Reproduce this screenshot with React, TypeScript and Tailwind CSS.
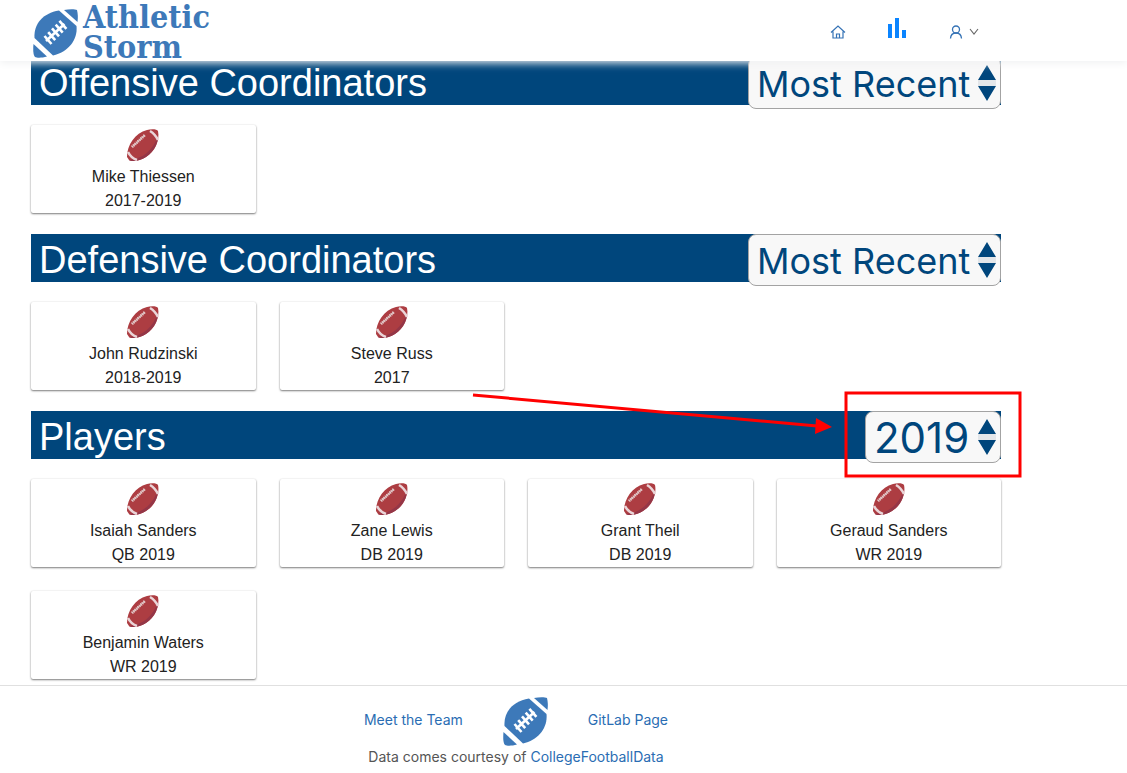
import React from "react";

type Person = { name: string; detail: string };

function LogoBall({ className }: { className: string }) {
  return (
    <svg viewBox="0 0 45 49" className={className} aria-hidden="true">
      <path
        fill="#3d79b9"
        d="M1.500 29C0.500 15 10 4 26 1.500L43.500 17C45 31 35 43 20 46.500Z"
      />
      <path fill="#3d79b9" d="M31 1C36 0 42 0 44 1C45 5 45 9 44.500 13Z" />
      <path fill="#3d79b9" d="M0.500 35L14 47.500C9 49 4 49 2 48C0 46 0 40 0.500 35Z" />
      <path
        stroke="#fff"
        strokeWidth="2.6"
        fill="none"
        d="M13 32L31.500 15M11.500 27L18.500 35M15.200 23.200L22.200 31.200M19 19.400L26 27.400M22.700 15.700L29.700 23.700M26.400 11.900L33.400 19.900"
      />
    </svg>
  );
}

function RedBall() {
  return (
    <svg viewBox="0 0 34 34" className="h-[34px] w-[34px]" aria-hidden="true">
      <path fill="#ad3d42" d="M1 29C1 17 9 5 21 2C25 1 31 1 32 3C34 12 29 24 20 29C14 33 6 34 3 32Z" />
      <path fill="#943647" d="M32 8C32 16 28 23 20 29C14 33 6 34 3 32C17 31 27 22 32 8Z" />
      <path fill="none" stroke="#ead5d8" strokeWidth="2.6" d="M24 3Q29 6 32 12M2 24Q5 30 11 32" />
      <path stroke="#d8b4b5" strokeWidth="1.5" d="M6 19L19 7" />
      <path stroke="#e4cdcd" strokeWidth="3" strokeDasharray="1 1" d="M6 19L19 7" />
    </svg>
  );
}

function SeasonSelect({ label, options, style }: { label: string; options: string[]; style: string }) {
  return (
    <div className={`relative h-[52px] shrink-0 ${style}`}>
      <select
        aria-label={label}
        className="block h-full w-full appearance-none rounded-lg border border-[#a3a3a3] bg-[#f8f8f8] pt-0.5 pl-2 font-['Inter',sans-serif] leading-[46px] text-[#00467c]"
      >
        {options.map((option) => (
          <option key={option}>{option}</option>
        ))}
      </select>
      <svg
        viewBox="0 0 18 36"
        className="pointer-events-none absolute top-2 right-[5px] h-9 w-[18px]"
        aria-hidden="true"
      >
        <path fill="#e3e6e9" d="M0 15H18V21H0Z" />
        <path fill="#00467c" d="M0 15L9 0L18 15ZM0 21H18L9 36Z" />
      </svg>
    </div>
  );
}

function Annotation() {
  return (
    <svg
      viewBox="0 0 550 87"
      className="pointer-events-none absolute -top-5 -right-[21px] h-[87px] w-[550px]"
      aria-hidden="true"
    >
      <rect x="374" y="2" width="174" height="83" fill="none" stroke="#f00" strokeWidth="3" />
      <path stroke="#f00" strokeWidth="3" d="M1 4L345 35" />
      <path fill="#f00" d="M344 27L360 36L343 43Z" />
    </svg>
  );
}

function Section({
  title,
  options,
  selectStyle,
  people,
  children,
}: {
  title: string;
  options: string[];
  selectStyle: string;
  people: Person[];
  children?: React.ReactNode;
}) {
  return (
    <section className="relative mb-[21px] last:mb-0">
      <div className="mb-5 flex h-12 items-start justify-between bg-[#00467c]">
        <h2 className="pl-2 text-[38px] leading-[52px] text-white">{title}</h2>
        <SeasonSelect label={`${title} season`} options={options} style={selectStyle} />
      </div>
      <ul className="grid grid-cols-4 gap-6">
        {people.map((person) => (
          <li
            key={person.name}
            className="flex h-[88px] flex-col items-center rounded-xs bg-white pt-[3px] text-base text-[#222] shadow-[0_1px_2px_rgba(0,0,0,0.5),0_0_2px_rgba(0,0,0,0.08)]"
          >
            <RedBall />
            <div className="mt-[3px] leading-6">{person.name}</div>
            <div className="leading-6">{person.detail}</div>
          </li>
        ))}
      </ul>
      {children}
    </section>
  );
}

export default function App() {
  return (
    <div className="min-h-screen bg-white font-['Liberation_Sans',Arial,sans-serif]">
      <header className="sticky top-0 z-10 flex h-[61px] items-center justify-between bg-white pr-[148px] pl-[33px] shadow-[0_2px_8px_#f0f1f2]">
        <a href="#home" className="flex items-center gap-[5px] text-[#3d79b9]">
          <LogoBall className="mt-1.5 h-[49px] w-[45px]" />
          <span className="mt-0.5 font-['DejaVu_Serif_Condensed','DejaVu_Serif',serif] text-[32px] leading-[30px] font-bold">
            Athletic
            <br />
            Storm
          </span>
        </a>
        <nav className="flex items-center">
          <a href="#home" aria-label="Home" className="mt-0.5">
            <svg viewBox="0 0 16 16" className="h-4 w-4" fill="none" stroke="#3472b5" strokeWidth="1.2">
              <path d="M1 8.5L8 2L15 8.5M3 7.5V14H13V7.5M6.5 14V10H9.5V14" />
            </svg>
          </a>
          <a href="#stats" aria-label="Statistics" className="mb-1.5 ml-[42px]">
            <svg viewBox="0 0 18 20" className="h-5 w-[18px]" fill="#0a84ff">
              <path d="M0 6H4V20H0ZM7 0H11V20H7ZM14 12H18V20H14Z" />
            </svg>
          </a>
          <button type="button" aria-label="Account" className="mt-0.5 ml-[42px] flex items-center gap-[5px]">
            <svg viewBox="0 0 16 16" className="h-4 w-4" fill="none" stroke="#3472b5" strokeWidth="1.3">
              <circle cx="8" cy="5.5" r="3.5" />
              <path d="M2.5 14.5C2.7 11 5 9 8 9S13.300 11 13.500 14.500" />
            </svg>
            <svg viewBox="0 0 10 10" className="h-2.5 w-2.5" fill="none" stroke="#666" strokeWidth="1.1">
              <path d="M1 2L5 7L9 2" />
            </svg>
          </button>
        </nav>
      </header>
      <main className="-mt-1 pr-[126px] pb-1.5 pl-[31px]">
        <Section
          title="Offensive Coordinators"
          options={["Most Recent"]}
          selectStyle="w-[253px] text-[36px]"
          people={[{ name: "Mike Thiessen", detail: "2017-2019" }]}
        />
        <Section
          title="Defensive Coordinators"
          options={["Most Recent"]}
          selectStyle="w-[253px] text-[36px]"
          people={[
            { name: "John Rudzinski", detail: "2018-2019" },
            { name: "Steve Russ", detail: "2017" },
          ]}
        />
        <Section
          title="Players"
          options={["2019"]}
          selectStyle="w-[136px] text-[42px]"
          people={[
            { name: "Isaiah Sanders", detail: "QB 2019" },
            { name: "Zane Lewis", detail: "DB 2019" },
            { name: "Grant Theil", detail: "DB 2019" },
            { name: "Geraud Sanders", detail: "WR 2019" },
            { name: "Benjamin Waters", detail: "WR 2019" },
          ]}
        >
          <Annotation />
        </Section>
      </main>
      <footer className="border-t border-[#e0e0e0] bg-white pt-[11px] pr-[126px] pb-1 pl-[31px] font-['Inter',sans-serif] text-sm text-[#555]">
        <div className="flex items-center justify-center gap-10">
          <a href="#team" className="pb-[3px] text-[#2a6db3]">
            Meet the Team
          </a>
          <LogoBall className="h-[49px] w-[45px]" />
          <a href="#gitlab" className="pb-[3px] text-[#2a6db3]">
            GitLab Page
          </a>
        </div>
        <p className="text-center leading-[22px]">
          Data comes courtesy of{" "}
          <a href="#data" className="text-[#2a6db3]">
            CollegeFootballData
          </a>
        </p>
      </footer>
    </div>
  );
}
